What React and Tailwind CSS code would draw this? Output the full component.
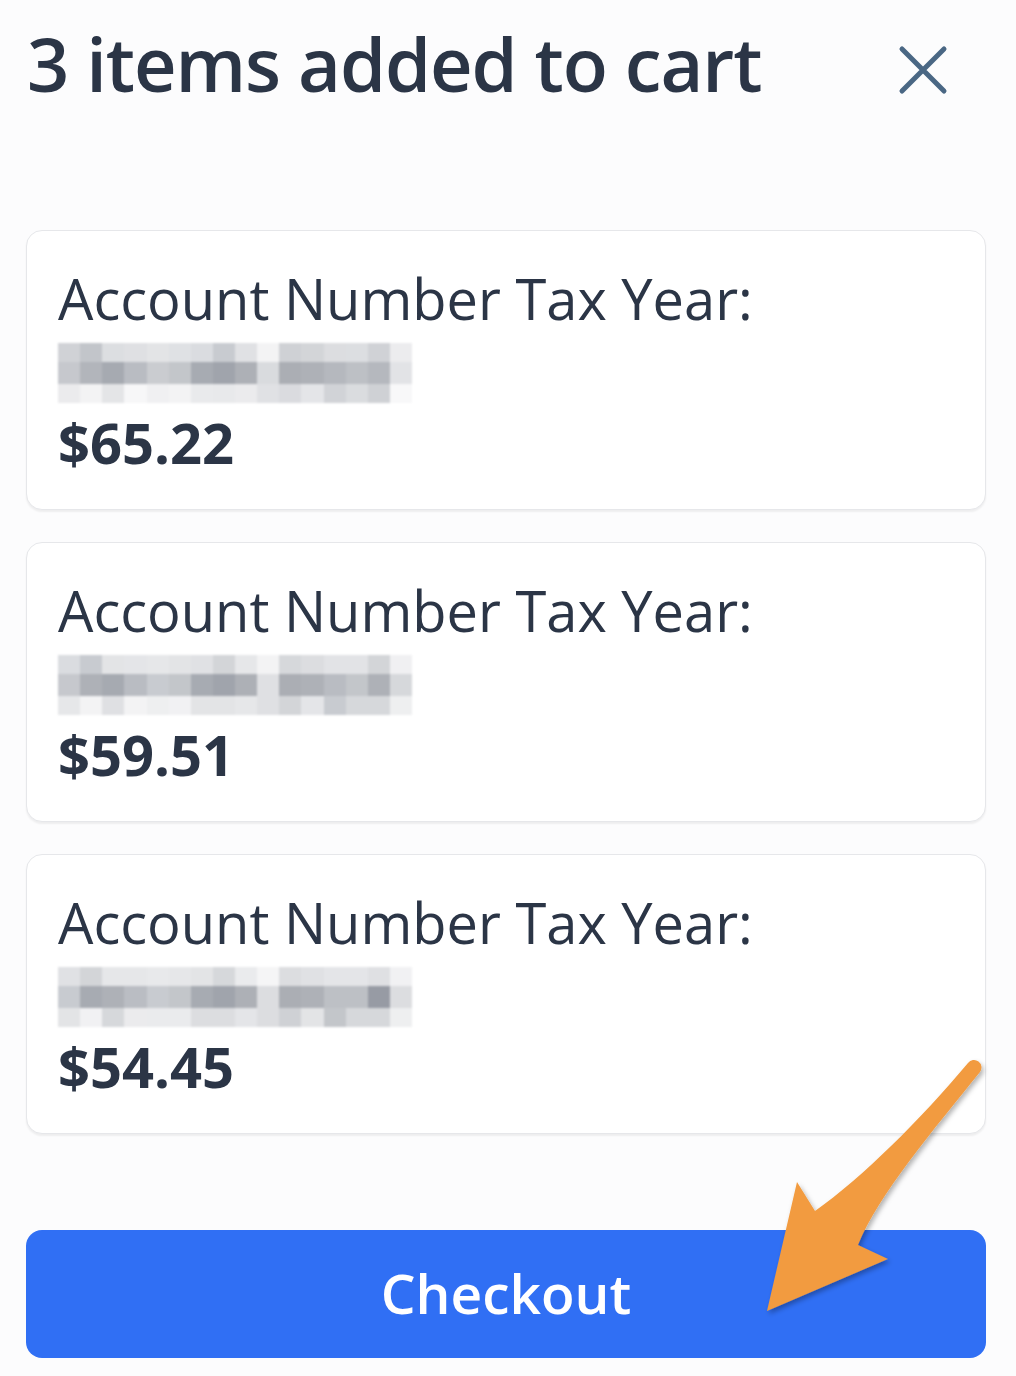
const items = [
  {
    price: "$65.22",
    blur: [
      ["#d0d2d6", "#c2c5ca", "#dcdee1", "#dfe0e3", "#e3e4e6", "#dfe1e4", "#dadce0", "#c8cbd0", "#e0e1e4", "#f3f3f4", "#cfd1d5", "#d3d5d8", "#dcdde0", "#dcdee1", "#d0d2d6", "#ececee"],
      ["#c6c8cd", "#b2b5bb", "#a6aab1", "#b9bcc2", "#caccd0", "#c3c6ca", "#a7abb2", "#a0a4ac", "#adb0b6", "#d9dbde", "#abaeb4", "#aeb1b7", "#b5b8be", "#bdc0c5", "#b5b8be", "#e2e3e6"],
      ["#ebebed", "#f3f3f4", "#e4e5e7", "#f7f7f8", "#f0f0f2", "#f3f3f4", "#e9eaec", "#e8e9eb", "#ebebed", "#e0e1e4", "#dadbdf", "#e4e5e8", "#d1d3d7", "#dadcdf", "#cfd1d5", "#f8f8f9"],
    ],
  },
  {
    price: "$59.51",
    blur: [
      ["#dadce0", "#c8cbd0", "#e3e4e6", "#e4e5e8", "#e6e7e9", "#e3e4e6", "#e0e1e4", "#d3d5d8", "#e6e7e9", "#f3f3f4", "#d6d8db", "#dcdde0", "#e2e3e6", "#e2e3e6", "#d3d5d8", "#f0f0f2"],
      ["#c6c8cd", "#aeb1b7", "#a6aab1", "#b9bcc2", "#c8cbd0", "#c3c6ca", "#a7abb2", "#a0a4ac", "#adb0b6", "#dfe0e3", "#abaeb4", "#aeb1b7", "#b9bcc2", "#c3c6ca", "#aeb1b7", "#d6d8db"],
      ["#e6e7e9", "#f3f3f4", "#dfe0e3", "#f3f3f4", "#eeeff0", "#f1f1f3", "#e3e4e6", "#e3e4e6", "#e6e7e9", "#dfe0e3", "#d3d5d8", "#e4e5e8", "#c8cbd0", "#d6d8db", "#d6d8db", "#eeeff0"],
    ],
  },
  {
    price: "$54.45",
    blur: [
      ["#e0e1e4", "#d3d5d8", "#e6e7e9", "#e6e7e9", "#e8e9eb", "#e6e7e9", "#e3e4e6", "#d6d8db", "#eaebed", "#f5f5f6", "#dcdde0", "#e0e1e4", "#e4e5e8", "#e4e5e8", "#dfe0e3", "#f1f1f3"],
      ["#c8cbd0", "#a7abb2", "#aeb1b7", "#babdc3", "#c8cbd0", "#c3c6ca", "#a7abb2", "#a0a4ac", "#adb0b6", "#dcdde0", "#abaeb4", "#aeb1b7", "#bdc0c5", "#bdc0c5", "#979ba4", "#dcdde0"],
      ["#e3e4e6", "#f1f1f3", "#d6d8db", "#ebebed", "#eaebed", "#eaebed", "#dcdde0", "#dcdde0", "#e4e5e8", "#dcdde0", "#cfd1d5", "#e3e4e6", "#c3c6ca", "#d6d8db", "#d6d8db", "#eeeff0"],
    ],
  },
]

function Blurred({ rows }) {
  return (
    <div className="flex flex-col w-[354px] h-[60px] mt-[13px] blur-[1px]">
      {rows.map((row, r) => (
        <div key={r} className={`flex ${r === 1 ? "h-[22px]" : "h-[19px]"}`}>
          {row.map((c, i) => (
            <div key={i} className="flex-1 h-full" style={{ backgroundColor: c }} />
          ))}
        </div>
      ))}
    </div>
  )
}

function CloseIcon() {
  return (
    <svg width="52" height="52" viewBox="0 0 52 52" className="mt-[17px]">
      <path
        d="M5 5 L47 47 M47 5 L5 47"
        stroke="#4a6784"
        strokeWidth="5"
        strokeLinecap="round"
        fill="none"
      />
    </svg>
  )
}

function Arrow() {
  return (
    <svg
      className="absolute left-0 top-0 pointer-events-none"
      width="1016"
      height="1376"
      viewBox="0 0 1016 1376"
    >
      <defs>
        <filter id="sh" x="-10%" y="-10%" width="130%" height="130%">
          <feDropShadow dx="2" dy="3" stdDeviation="2.5" floodColor="#000" floodOpacity="0.3" />
        </filter>
      </defs>
      <path
        d="M767 1311 L797 1182 L815 1211 C862 1178 922 1118 968 1063 A7 7 0 0 1 980 1072 C935 1128 878 1195 858 1245 L888 1259 Z"
        fill="#f29b3f"
        filter="url(#sh)"
      />
    </svg>
  )
}

export default function App() {
  return (
    <div className="relative w-[1016px] h-[1376px] bg-[#fcfcfd] overflow-hidden font-['Open_Sans',sans-serif] text-[#2b3546]">

      {/* header */}
      <div className="flex items-start justify-between pl-[27px] pr-[67px] pt-[27px]">
        <h1 className="text-[74px] leading-[74px] font-semibold tracking-[-1.1px]">
          3 items added to cart
        </h1>
        <CloseIcon />
      </div>

      {/* items */}
      <div className="flex flex-col gap-[32px] mt-[129px] ml-[26px] w-[960px]">
        {items.map((it, i) => (
          <div
            key={i}
            className="h-[280px] rounded-[16px] bg-white border border-[#e6e7ea] shadow-[0_2px_2px_rgba(0,0,0,0.06)] pl-[31px] pt-[35px]"
          >
            <p className="text-[56px] leading-[64px]">Account Number Tax Year:</p>
            <Blurred rows={it.blur} />
            <p className="text-[56px] leading-[64px] font-bold mt-[7px]">{it.price}</p>
          </div>
        ))}
      </div>

      {/* checkout */}
      <div className="ml-[26px] w-[960px] mt-[96px]">
        <button className="w-full h-[128px] rounded-[16px] bg-[#306ff4] text-white text-[55px] font-semibold leading-none pb-[4px]">
          Checkout
        </button>
      </div>

      <Arrow />
    </div>
  )
}
